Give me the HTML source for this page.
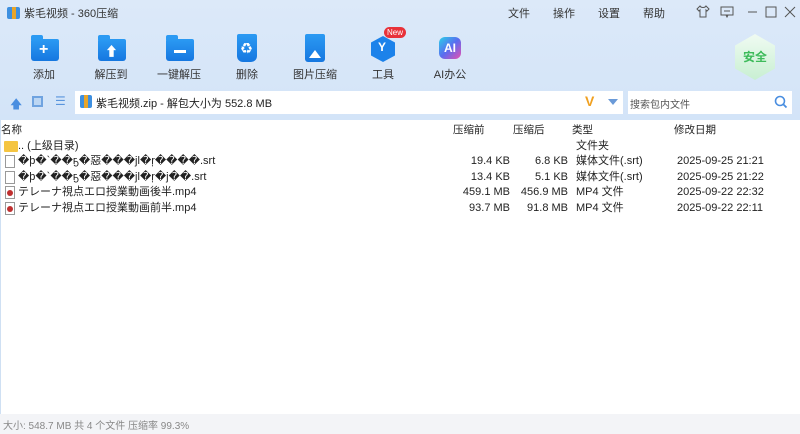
<!DOCTYPE html><html><head><meta charset="utf-8"><style>
*{margin:0;padding:0;box-sizing:border-box}
body{width:800px;height:434px;overflow:hidden;font-family:"Liberation Sans","Noto Sans CJK SC",sans-serif;font-size:12px;color:#222;position:relative;background:#fff}
.top{position:absolute;left:0;top:0;width:800px;height:120px;background:linear-gradient(180deg,#dce9f9 0%,#d3e4f8 100%)}
.a{position:absolute;white-space:nowrap}
.ic{position:absolute;width:28px;height:22px;border-radius:2px 2px 3px 3px;background:linear-gradient(#2b9af3,#1677e0)}
.tab{position:absolute;width:12px;height:5px;border-radius:2px 2px 0 0;background:#2b9af3}
.lbl{position:absolute;top:66px;font-size:11px;color:#333;transform:translateX(-50%)}
.row{position:absolute;left:0;width:800px;height:15px;font-size:11px;line-height:15px}
.r{position:absolute;text-align:right}
</style></head><body>
<div class="top"></div>
<div class="a" style="left:7px;top:7px;width:13px;height:12px;background:#3d8fe0;border-radius:2px"></div>
<div class="a" style="left:12px;top:7px;width:4px;height:12px;background:#e8a52a"></div>
<div class="a" style="left:24px;top:5px;font-size:11px;color:#333">紫毛视频 - 360压缩</div>
<div class="a" style="left:508px;top:5px;font-size:11px;color:#333">文件</div>
<div class="a" style="left:553px;top:5px;font-size:11px;color:#333">操作</div>
<div class="a" style="left:598px;top:5px;font-size:11px;color:#333">设置</div>
<div class="a" style="left:643px;top:5px;font-size:11px;color:#333">帮助</div>
<svg class="a" style="left:696px;top:5px" width="14" height="13"><path d="M4 1L1 4l2 2 1-1v7h6V5l1 1 2-2-3-3c-1 2-5 2-6 0z" fill="none" stroke="#555"/></svg>
<svg class="a" style="left:720px;top:6px" width="14" height="12"><rect x="1" y="1" width="12" height="8" fill="none" stroke="#555"/><path d="M4 5h6M6 9l1 2 1-2" stroke="#555" fill="none"/></svg>
<svg class="a" style="left:746px;top:6px" width="50" height="12"><path d="M2 6h9" stroke="#555"/><rect x="20" y="1" width="10" height="10" fill="none" stroke="#555"/><path d="M39 1l10 10M49 1l-10 10" stroke="#555"/></svg>
<div class="tab" style="left:31px;top:35px"></div><div class="ic" style="left:31px;top:39px"></div><div class="a" style="left:39px;top:39px;color:#fff;font-size:16px;font-weight:bold;line-height:22px">+</div>
<div class="tab" style="left:98px;top:35px"></div><div class="ic" style="left:98px;top:39px"></div><div class="a" style="left:105px;top:41px;color:#fff;font-size:13px">⬆</div>
<div class="tab" style="left:166px;top:35px"></div><div class="ic" style="left:166px;top:39px"></div><div class="a" style="left:174px;top:50px;width:12px;height:3px;background:#fff"></div>
<div class="ic" style="left:237px;top:34px;width:20px;height:28px;border-radius:2px 2px 6px 6px"></div><div class="a" style="left:241px;top:40px;color:#fff;font-size:11px">♻</div>
<div class="ic" style="left:305px;top:34px;width:20px;height:28px"></div><div class="a" style="left:309px;top:50px;width:12px;height:8px;background:#fff;clip-path:polygon(0 100%,50% 0,100% 100%)"></div>
<div class="a" style="left:371px;top:36px;width:24px;height:26px;background:#1c82ea;clip-path:polygon(50% 0,100% 25%,100% 75%,50% 100%,0 75%,0 25%)"></div><div class="a" style="left:378px;top:40px;color:#fff;font-weight:bold;font-size:12px">Y</div>
<div class="a" style="left:384px;top:27px;width:22px;height:11px;background:#e8323a;border-radius:6px;color:#fff;font-size:8px;text-align:center;line-height:11px">New</div>
<div class="a" style="left:439px;top:37px;width:22px;height:22px;border-radius:6px;background:linear-gradient(135deg,#2bd0e8,#5a6cf0,#e84fb0);color:#fff;font-weight:bold;font-size:12px;text-align:center;line-height:22px">AI</div>
<div class="lbl" style="left:44px">添加</div><div class="lbl" style="left:111px">解压到</div><div class="lbl" style="left:179px">一键解压</div><div class="lbl" style="left:247px">删除</div><div class="lbl" style="left:315px">图片压缩</div><div class="lbl" style="left:383px">工具</div><div class="lbl" style="left:450px">AI办公</div>
<div class="a" style="left:735px;top:34px;width:40px;height:46px;background:linear-gradient(#f0fbf2,#c8efd2);clip-path:polygon(50% 0,100% 25%,100% 75%,50% 100%,0 75%,0 25%);color:#3dbb5a;font-weight:bold;font-size:12px;text-align:center;line-height:46px">安全</div>
<div class="a" style="left:10px;top:95px;color:#4a8ee0;font-size:12px">🡅</div>
<div class="a" style="left:32px;top:96px;width:11px;height:11px;border:2px solid #6fa3e0;background:#bcd6f3"></div>
<div class="a" style="left:55px;top:94px;color:#5a95dd;font-size:12px">☰</div>
<div class="a" style="left:75px;top:91px;width:548px;height:23px;background:#fff"></div>
<div class="a" style="left:80px;top:95px;width:12px;height:13px;background:#3d8fe0;border-radius:2px"></div><div class="a" style="left:84px;top:95px;width:4px;height:13px;background:#e8a52a"></div>
<div class="a" style="left:96px;top:95px;font-size:11px">紫毛视频.zip - 解包大小为 552.8 MB</div>
<div class="a" style="left:585px;top:93px;color:#f0a020;font-weight:bold;font-size:14px">V</div>
<div class="a" style="left:608px;top:99px;border:5px solid transparent;border-top:6px solid #6a9ad8"></div>
<div class="a" style="left:628px;top:91px;width:164px;height:23px;background:#fff"></div>
<div class="a" style="left:630px;top:96px;font-size:10px;color:#555">搜索包内文件</div>
<svg class="a" style="left:774px;top:95px" width="14" height="14"><circle cx="6" cy="6" r="4.5" fill="none" stroke="#4a8ee0" stroke-width="1.6"/><path d="M9.5 9.5l3 3" stroke="#4a8ee0" stroke-width="1.8"/></svg>
<div class="a" style="left:0;top:120px;width:1px;height:294px;background:#cfe0f3"></div>
<div class="row" style="top:123px;font-size:10.5px"><span class="a" style="left:1px">名称</span><span class="a" style="left:453px">压缩前</span><span class="a" style="left:513px">压缩后</span><span class="a" style="left:572px">类型</span><span class="a" style="left:674px">修改日期</span></div>
<div class="row" style="top:139px"><span class="a" style="left:4px;top:2px;width:14px;height:11px;background:#f5c542;border-radius:1px"></span><span class="a" style="left:18px">.. (上级目录)</span><span class="a" style="left:576px">文件夹</span></div>
<div class="row" style="top:154px"><span class="a" style="left:5px;top:1px;width:10px;height:13px;border:1px solid #999;background:#fff"></span><span class="a" style="left:18px">�þ�`��ҕ�惡���ϳl�ŗ����.srt</span><span class="r" style="right:290px">19.4 KB</span><span class="r" style="right:232px">6.8 KB</span><span class="a" style="left:576px">媒体文件(.srt)</span><span class="a" style="left:677px">2025-09-25 21:21</span></div>
<div class="row" style="top:170px"><span class="a" style="left:5px;top:1px;width:10px;height:13px;border:1px solid #999;background:#fff"></span><span class="a" style="left:18px">�þ�`��ҕ�惡���ϳl�ŗ�j��.srt</span><span class="r" style="right:290px">13.4 KB</span><span class="r" style="right:232px">5.1 KB</span><span class="a" style="left:576px">媒体文件(.srt)</span><span class="a" style="left:677px">2025-09-25 21:22</span></div>
<div class="row" style="top:185px"><span class="a" style="left:5px;top:1px;width:10px;height:13px;border:1px solid #999;background:#fff"></span><span class="a" style="left:7px;top:5px;width:6px;height:6px;border-radius:50%;background:#c03030"></span><span class="a" style="left:18px">テレーナ視点エロ授業動画後半.mp4</span><span class="r" style="right:290px">459.1 MB</span><span class="r" style="right:232px">456.9 MB</span><span class="a" style="left:576px">MP4 文件</span><span class="a" style="left:677px">2025-09-22 22:32</span></div>
<div class="row" style="top:201px"><span class="a" style="left:5px;top:1px;width:10px;height:13px;border:1px solid #999;background:#fff"></span><span class="a" style="left:7px;top:5px;width:6px;height:6px;border-radius:50%;background:#c03030"></span><span class="a" style="left:18px">テレーナ視点エロ授業動画前半.mp4</span><span class="r" style="right:290px">93.7 MB</span><span class="r" style="right:232px">91.8 MB</span><span class="a" style="left:576px">MP4 文件</span><span class="a" style="left:677px">2025-09-22 22:11</span></div>
<div class="a" style="left:0;top:414px;width:800px;height:20px;background:#f3f4f7"></div>
<div class="a" style="left:3px;top:417px;font-size:10px;color:#888">大小: 548.7 MB 共 4 个文件 压缩率 99.3%</div>
</body></html>
